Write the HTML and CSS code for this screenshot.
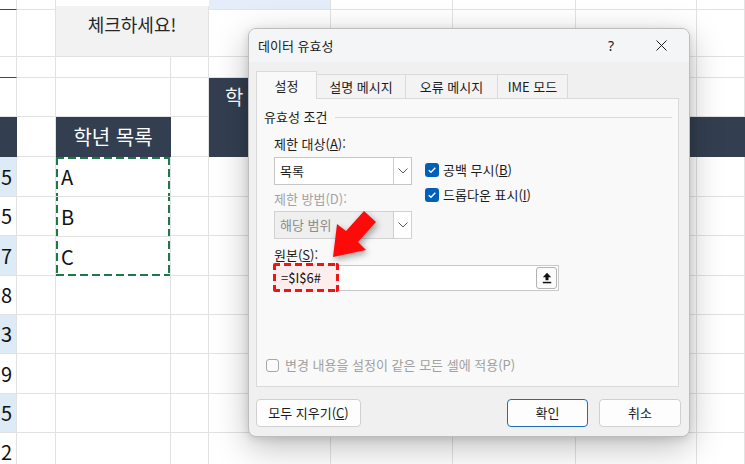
FILE: index.html
```html
<!DOCTYPE html>
<html lang="ko">
<head>
<meta charset="utf-8">
<title>데이터 유효성</title>
<link rel="stylesheet" href="styles.css">
</head>
<body>
<div class="sheet">
  <!-- row 1 -->
  <div class="c topdark"></div><div class="c"></div>
  <div class="c note">체크하세요!</div>
  <div class="c lb"></div><div class="c"></div><div class="c"></div><div class="c"></div><div class="c"></div>
  <!-- row 2 -->
  <div class="c"></div><div class="c"></div>
  <div class="c"></div><div class="c"></div><div class="c"></div><div class="c"></div><div class="c"></div>
  <!-- row 3 -->
  <div class="c topdark"></div><div class="c"></div><div class="c"></div><div class="c"></div>
  <div class="c"></div><div class="c"></div><div class="c"></div><div class="c"></div><div class="c"></div>
  <!-- row 4 -->
  <div class="c"></div><div class="c"></div><div class="c"></div><div class="c"></div>
  <div class="c dk pad">학</div><div class="c"></div><div class="c"></div><div class="c"></div><div class="c"></div>
  <!-- row 5 -->
  <div class="c dk"></div><div class="c"></div><div class="c dk ctr">학년 목록</div><div class="c"></div>
  <div class="c dk span5"></div>
  <!-- rows 6-8 -->
  <div class="c n b">5</div><div class="c"></div>
  <div class="copybox">
    <div class="bi">A</div>
    <div class="bi">B</div>
    <div class="bi last">C</div>
  </div>
  <div class="c"></div><div class="c"></div><div class="c"></div><div class="c"></div><div class="c"></div><div class="c"></div>
  <div class="c n">5</div><div class="c"></div>
  <div class="c"></div><div class="c"></div><div class="c"></div><div class="c"></div><div class="c"></div><div class="c"></div>
  <div class="c n b">7</div><div class="c"></div>
  <div class="c"></div><div class="c"></div><div class="c"></div><div class="c"></div><div class="c"></div><div class="c"></div>
  <!-- rows 9-13 -->
  <div class="c n">8</div><div class="c"></div><div class="c"></div><div class="c"></div><div class="c"></div><div class="c"></div><div class="c"></div><div class="c"></div><div class="c"></div>
  <div class="c n b">3</div><div class="c"></div><div class="c"></div><div class="c"></div><div class="c"></div><div class="c"></div><div class="c"></div><div class="c"></div><div class="c"></div>
  <div class="c n">9</div><div class="c"></div><div class="c"></div><div class="c"></div><div class="c"></div><div class="c"></div><div class="c"></div><div class="c"></div><div class="c"></div>
  <div class="c n b">5</div><div class="c"></div><div class="c"></div><div class="c"></div><div class="c"></div><div class="c"></div><div class="c"></div><div class="c"></div><div class="c"></div>
  <div class="c n">2</div><div class="c"></div><div class="c"></div><div class="c"></div><div class="c"></div><div class="c"></div><div class="c"></div><div class="c"></div><div class="c"></div>
</div>

<div class="dlg">
  <div class="tbar">
    <span class="ttl">데이터 유효성</span>
    <span class="tbtn help">?</span>
    <span class="tbtn close"><svg width="11" height="11" viewBox="0 0 11 11"><path d="M0.5 0.5L10.5 10.5M10.5 0.5L0.5 10.5" stroke="#1b1b1b" stroke-width="1" fill="none"/></svg></span>
  </div>
  <div class="dbody">
    <div class="tabs">
      <div class="tab on">설정</div>
      <div class="tab w89">설명 메시지</div>
      <div class="tab w92">오류 메시지</div>
      <div class="tab w71">IME 모드</div>
    </div>
    <div class="panel">
      <div class="legend"><span>유효성 조건</span><span class="rule"></span></div>
      <div class="grp">
        <div class="row1">
          <div class="lcol">
            <div class="lbl">제한 대상(<u>A</u>):</div>
            <div class="sel s1"><span class="v">목록</span><span class="dd"><svg width="10" height="6" viewBox="0 0 10 6"><polyline points="0.5,0.5 5,5 9.5,0.5" fill="none" stroke="#5a5a5a" stroke-width="1"/></svg></span></div>
            <div class="lbl dis l2">제한 방법(D):</div>
            <div class="sel s2 off"><span class="v">해당 범위</span><span class="dd"><svg width="10" height="6" viewBox="0 0 10 6"><polyline points="0.5,0.5 5,5 9.5,0.5" fill="none" stroke="#5a5a5a" stroke-width="1"/></svg></span></div>
          </div>
          <div class="rcol">
            <div class="ck"><span class="cb"><svg width="10" height="10" viewBox="0 0 10 10"><polyline points="1.8,5.2 4,7.3 8.3,2.7" fill="none" stroke="#fff" stroke-width="1.4"/></svg></span><span>공백 무시(<u>B</u>)</span></div>
            <div class="ck"><span class="cb"><svg width="10" height="10" viewBox="0 0 10 10"><polyline points="1.8,5.2 4,7.3 8.3,2.7" fill="none" stroke="#fff" stroke-width="1.4"/></svg></span><span>드롭다운 표시(<u>I</u>)</span></div>
          </div>
        </div>
        <div class="lbl l3">원본(<u>S</u>):</div>
        <div class="inp">
          <span class="hl"></span>
          <span class="itxt">=$I$6#</span>
          <span class="up"><svg width="10" height="12" viewBox="0 0 10 12"><path d="M5 0.8L0.8 5.3H3.5V8.3H6.5V5.3H9.2Z" fill="#111"/><rect x="0.8" y="9.8" width="8.4" height="1.5" fill="#111"/></svg></span>
        </div>
      </div>
      <div class="apply"><span class="cb2"></span><span>변경 내용을 설정이 같은 모든 셀에 적용(P)</span></div>
    </div>
    <div class="btns">
      <div class="btn wclr">모두 지우기(<u>C</u>)</div>
      <div class="btn ok">확인</div>
      <div class="btn cancel">취소</div>
    </div>
  </div>
</div>

<svg class="arrow" width="745" height="464" viewBox="0 0 745 464">
  <polygon points="333,257 366,250 358,242 376,222 364,211 346,231 337,224" fill="#ff0a0a"/>
</svg>
</body>
</html>
```
FILE: styles.css
```css
* { box-sizing: border-box; margin: 0; padding: 0; }
html, body { width: 745px; height: 464px; overflow: hidden; }
body {
  position: relative;
  background: #fff;
  font-family: "Noto Sans CJK KR", "Noto Sans", sans-serif;
  color: #1b1b1b;
}

/* ---------- spreadsheet ---------- */
.sheet {
  display: grid;
  grid-template-columns: 17px 39px 115px 38px 122px 122px 123px 121px 48px;
  grid-template-rows: 10px 47px 21px 39px 40px 40px 39px 40px 39px 39px 40px 39px 39px;
  width: 745px;
}
.c {
  border-right: 1px solid #e2e2e2;
  border-bottom: 1px solid #e2e2e2;
  font-size: 20px;
  line-height: 24px;
  color: #111;
  display: flex;
  align-items: center;
  overflow: hidden;
  white-space: nowrap;
}
.topdark { border-bottom-color: #3b4657; }
.lb { background: #e4edf9; }
.note {
  grid-column: 3 / span 2;
  grid-row: 1 / span 2;
  margin-top: 6px;
  background: #f2f2f2;
  justify-content: center;
  align-items: flex-start;
  padding-top: 6px;
  font-size: 18px;
  color: #262626;
}
.dk { background: #333f50; color: #fff; border-right-color: #333f50; border-bottom-color: #333f50; }
.pad { padding-left: 16px; }
.ctr { justify-content: center; }
.span5 { grid-column: span 5; }
.n { justify-content: flex-end; padding-right: 4px; }
.b { background: #ddebf7; }

.copybox {
  grid-column: 3;
  grid-row: 6 / span 3;
  display: flex;
  flex-direction: column;
  border-right: 1px solid #e2e2e2;
  background:
    repeating-linear-gradient(90deg, #1d7a46 0 8px, transparent 8px 12px) left top / 100% 2px no-repeat,
    repeating-linear-gradient(90deg, #1d7a46 0 8px, transparent 8px 12px) left bottom / 100% 2px no-repeat,
    repeating-linear-gradient(180deg, #1d7a46 0 8px, transparent 8px 12px) left top / 2px 100% no-repeat,
    repeating-linear-gradient(180deg, #1d7a46 0 8px, transparent 8px 12px) right top / 2px 100% no-repeat;
}
.bi {
  flex: 1;
  display: flex;
  align-items: center;
  padding-left: 5px;
  font-size: 20px;
  line-height: 24px;
  color: #111;
  border-bottom: 1px solid #e2e2e2;
}
.bi.last { border-bottom: none; }

/* ---------- dialog ---------- */
.dlg {
  position: absolute;
  left: 248px;
  top: 28px;
  width: 442px;
  height: 409px;
  background: #f0f0f0;
  border: 1px solid #bdbdbd;
  border-radius: 8px;
  box-shadow: 0 10px 34px rgba(0, 0, 0, 0.26), 0 2px 8px rgba(0, 0, 0, 0.12);
  display: flex;
  flex-direction: column;
  overflow: hidden;
  font-size: 13px;
  line-height: 16px;
}
.tbar {
  height: 33px;
  flex: none;
  display: flex;
  align-items: center;
  background: #f4f5f7;
  padding-left: 9px;
}
.ttl { flex: 1; font-size: 13px; }
.tbtn { width: 46px; height: 33px; display: flex; align-items: center; justify-content: center; }
.help { margin-right: 4px; font-size: 14px; font-family: "Noto Sans", sans-serif; }
.close { margin-right: 5px; }

.dbody {
  flex: 1;
  display: flex;
  flex-direction: column;
  padding: 10px 10px 9px 7px;
}
.tabs {
  display: flex;
  align-items: flex-end;
  height: 27px;
  margin-bottom: -1px;
}
.tab {
  height: 25px;
  display: flex;
  align-items: center;
  justify-content: center;
  background: #f3f3f3;
  border: 1px solid #dadada;
  border-bottom: none;
  margin-left: -1px;
}
.tab.on {
  width: 61px;
  height: 28px;
  margin-left: 0;
  background: #f9f9f9;
  position: relative;
  z-index: 1;
}
.w89 { width: 90px; }
.w92 { width: 93px; }
.w71 { width: 71px; }

.panel {
  height: 289px;
  flex: none;
  border: 1px solid #dadada;
  background: #f9f9f9;
  display: flex;
  flex-direction: column;
}
.legend {
  display: flex;
  align-items: center;
  margin: 10px 6px 0 7px;
}
.rule { flex: 1; height: 1px; background: #d9d9d9; margin-left: 8px; }
.grp { padding-left: 17px; margin-top: 11px; }
.row1 { display: flex; }
.lcol { width: 138px; display: flex; flex-direction: column; }
.rcol { margin-left: 13px; padding-top: 25px; display: flex; flex-direction: column; gap: 7px; }
.lbl { height: 16px; }
.dis { color: #a3a3a3; }
.l2 { margin-top: 6px; }
.l3 { margin-top: 8px; }
.sel {
  height: 28px;
  display: flex;
  border: 1px solid #c6c6c6;
  background: #fff;
}
.s1 { margin-top: 5px; }
.s2 { margin-top: 4px; }
.sel .v { flex: 1; padding-left: 5px; line-height: 26px; }
.sel .dd {
  width: 18px;
  border-left: 1px solid #cfcfcf;
  display: flex;
  align-items: center;
  justify-content: center;
  background: #fff;
}
.sel.off { border-color: #d2d2d2; background: #efefef; }
.sel.off .v { color: #8c8c8c; }

.ck { display: flex; align-items: center; gap: 4px; height: 18px; white-space: nowrap; }
.cb {
  width: 14px;
  height: 14px;
  border-radius: 3px;
  background: #005fb8;
  display: flex;
  align-items: center;
  justify-content: center;
}

.inp {
  position: relative;
  margin-top: 2px;
  width: 285px;
  height: 26px;
  display: flex;
  align-items: center;
  border: 1px solid #c8c8c8;
  background: #fff;
  padding-left: 6px;
}
.itxt { position: relative; color: #111; }
.hl {
  position: absolute;
  left: -2px;
  top: -3px;
  width: 66px;
  height: 29px;
  background:
    repeating-linear-gradient(90deg, #f01414 0 7px, transparent 7px 11px) left top / 100% 3px no-repeat,
    repeating-linear-gradient(90deg, #f01414 0 7px, transparent 7px 11px) left bottom / 100% 3px no-repeat,
    repeating-linear-gradient(180deg, #f01414 0 7px, transparent 7px 11px) left top / 3px 100% no-repeat,
    repeating-linear-gradient(180deg, #f01414 0 7px, transparent 7px 11px) right top / 3px 100% no-repeat,
    #fdeded;
  border-radius: 2px;
}
.up {
  margin-left: auto;
  margin-right: 1px;
  width: 21px;
  height: 22px;
  border: 1px solid #b3b3b3;
  border-radius: 3px;
  background: #fbfbfb;
  display: flex;
  align-items: center;
  justify-content: center;
}

.apply {
  margin-top: auto;
  padding-left: 9px;
  padding-bottom: 13px;
  display: flex;
  align-items: center;
  gap: 6px;
  color: #a0a0a0;
  white-space: nowrap;
}
.cb2 {
  width: 13px;
  height: 13px;
  border: 1px solid #a6a6a6;
  border-radius: 3px;
  background: #fbfbfb;
}

.btns { display: flex; margin-top: auto; margin-right: -2px; }
.btn {
  height: 28px;
  display: flex;
  align-items: center;
  justify-content: center;
  border: 1px solid #d0d0d0;
  border-radius: 4px;
  background: #fdfdfd;
}
.wclr { width: 105px; }
.ok { width: 81px; margin-left: auto; border-color: #1b6cc0; }
.cancel { width: 82px; margin-left: 11px; }

/* ---------- annotation arrow ---------- */
.arrow {
  position: absolute;
  left: 0;
  top: 0;
  pointer-events: none;
  filter: drop-shadow(2px 3px 3px rgba(0, 0, 0, 0.35));
}
```
